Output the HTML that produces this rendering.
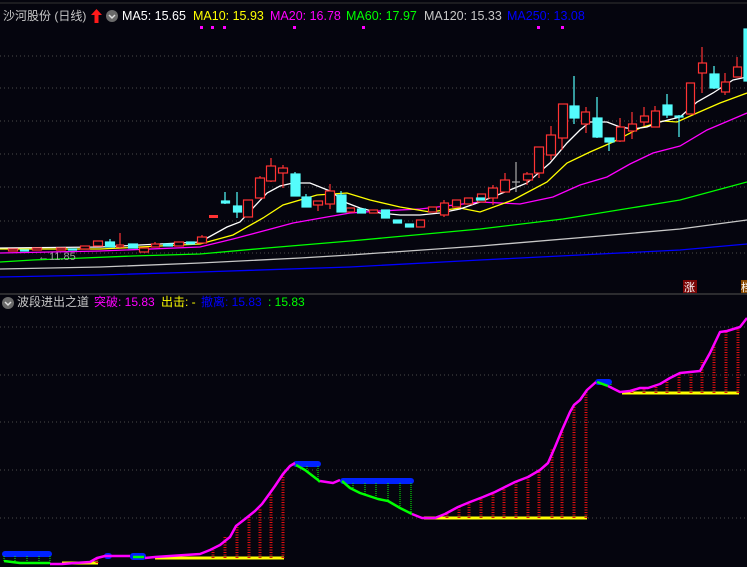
<!DOCTYPE html>
<html><head><meta charset="utf-8"><style>
html,body{margin:0;padding:0;background:#05050e;}
body{width:747px;height:567px;overflow:hidden;position:relative;font-family:"Liberation Sans","Noto Sans CJK SC",sans-serif;}
.t{position:absolute;font-size:12.5px;white-space:nowrap;line-height:16px;}
</style></head><body>
<svg width="747" height="567" style="position:absolute;left:0;top:0" xmlns="http://www.w3.org/2000/svg">
<rect width="747" height="567" fill="#05050e"/>
<line x1="0" y1="3" x2="747" y2="3" stroke="#333" />
<g stroke="#4a4a4a" stroke-dasharray="1 3">
<line x1="0" y1="56" x2="747" y2="56"/><line x1="0" y1="88" x2="747" y2="88"/><line x1="0" y1="121" x2="747" y2="121"/><line x1="0" y1="154" x2="747" y2="154"/><line x1="0" y1="187" x2="747" y2="187"/><line x1="0" y1="221" x2="747" y2="221"/><line x1="0" y1="253" x2="747" y2="253"/>
<line x1="0" y1="327" x2="747" y2="327"/><line x1="0" y1="375" x2="747" y2="375"/><line x1="0" y1="422" x2="747" y2="422"/><line x1="0" y1="470" x2="747" y2="470"/><line x1="0" y1="518" x2="747" y2="518"/>
</g>
<line x1="0" y1="294" x2="747" y2="294" stroke="#3a3a3a" stroke-width="1.5"/>
<g fill="#ff00ff"><rect x="200" y="26" width="3" height="3"/><rect x="211" y="26" width="3" height="3"/><rect x="223" y="26" width="3" height="3"/><rect x="293" y="26" width="3" height="3"/><rect x="362" y="26" width="3" height="3"/><rect x="537" y="26" width="3" height="3"/><rect x="561" y="26" width="3" height="3"/></g>
<g fill="none" stroke-width="1.3">
<polyline stroke="#0000ff" points="0,277 100,275 200,272 350,267 480,260 600,254 680,250 747,244"/>
<polyline stroke="#c8c8c8" points="0,269 100,267 200,263 300,258 350,255 480,246 600,236 680,229 747,220"/>
<polyline stroke="#00ff00" points="0,262 33,260 83,258 133,256 200,254 267,248 350,241 480,229 563,219 680,200 747,182"/>
<polyline stroke="#ff00ff" points="0,253 100,251 200,247 233,239 267,230 293,223 327,217 350,213 380,211 420,209 480,202 520,204 553,197 580,185 607,177 630,164 653,153 680,146 707,130 747,113"/>
<polyline stroke="#ffff00" points="0,249 100,249 200,244 233,235 263,218 283,205 317,195 347,193 370,200 400,207 430,212 460,208 480,212 513,200 547,182 567,163 590,152 613,142 640,128 663,121 677,122 697,113 720,103 747,93"/>
<polyline stroke="#ffffff" points="0,248 100,247 200,242 227,227 240,222 253,208 267,193 280,186 293,183 310,183 330,191 347,203 360,208 380,213 400,215 420,215 440,213 460,209 480,202 500,194 527,183 550,163 567,143 580,130 590,122 607,122 620,127 633,129 647,127 660,122 680,117 697,102 713,93 733,80 747,77"/>
</g>
<g stroke-width="1.2">
<g stroke="#ff3333" fill="#05050e">
<line x1="120" y1="233" x2="120" y2="248"/>
<line x1="155" y1="242" x2="155" y2="247"/>
<line x1="202" y1="235" x2="202" y2="243"/>
<line x1="248" y1="200" x2="248" y2="217"/>
<line x1="260" y1="176" x2="260" y2="198"/>
<line x1="271" y1="158" x2="271" y2="182"/>
<line x1="283" y1="165" x2="283" y2="188"/>
<line x1="318" y1="201" x2="318" y2="211"/>
<line x1="330" y1="184" x2="330" y2="209"/>
<line x1="444" y1="200" x2="444" y2="217"/>
<line x1="493" y1="185" x2="493" y2="205"/>
<line x1="505" y1="173" x2="505" y2="192"/>
<line x1="527" y1="172" x2="527" y2="185"/>
<line x1="539" y1="147" x2="539" y2="178"/>
<line x1="551" y1="126" x2="551" y2="160"/>
<line x1="562" y1="104" x2="562" y2="150"/>
<line x1="586" y1="107" x2="586" y2="133"/>
<line x1="620" y1="118" x2="620" y2="142"/>
<line x1="632" y1="112" x2="632" y2="139"/>
<line x1="644" y1="107" x2="644" y2="126"/>
<line x1="655" y1="106" x2="655" y2="127"/>
<line x1="702" y1="47" x2="702" y2="93"/>
<line x1="725" y1="73" x2="725" y2="95"/>
<line x1="737" y1="57" x2="737" y2="77"/>
<rect x="8.5" y="249" width="9" height="2"/><rect x="32.5" y="248" width="9" height="2"/><rect x="56.5" y="248" width="9" height="2"/><rect x="80.5" y="246" width="9" height="3"/>
<rect x="93.5" y="241" width="9" height="5"/><rect x="116.5" y="245" width="7" height="2"/><rect x="139.5" y="248" width="9" height="4"/><rect x="151.5" y="244" width="8" height="3"/><rect x="174.5" y="242" width="9" height="4"/><rect x="197.5" y="237" width="9" height="6"/>
<rect x="243.5" y="200" width="9" height="17"/><rect x="255.5" y="178" width="9" height="20"/><rect x="266.5" y="166" width="9" height="15"/><rect x="278.5" y="168" width="9" height="5"/>
<rect x="313.5" y="201" width="9" height="4"/><rect x="325.5" y="191" width="9" height="13"/><rect x="346.5" y="208" width="8" height="4"/><rect x="369.5" y="210" width="8" height="3"/>
<rect x="416.5" y="220" width="8" height="7"/><rect x="428.5" y="207" width="8" height="5"/><rect x="440.5" y="203" width="8" height="12"/><rect x="452.5" y="200" width="8" height="7"/><rect x="464.5" y="198" width="8" height="6"/>
<rect x="477.5" y="194" width="8" height="8"/><rect x="488.5" y="188" width="9" height="10"/><rect x="500.5" y="180" width="9" height="12"/><rect x="523.5" y="174" width="9" height="6"/><rect x="534.5" y="147" width="9" height="26"/><rect x="546.5" y="135" width="9" height="20"/><rect x="558.5" y="104" width="9" height="34"/>
<rect x="581.5" y="112" width="8" height="12"/><rect x="616.5" y="127" width="8" height="14"/><rect x="628.5" y="124" width="8" height="7"/><rect x="640.5" y="116" width="8" height="6"/><rect x="651.5" y="111" width="8" height="16"/><rect x="686.5" y="83" width="8" height="31"/><rect x="698.5" y="63" width="8" height="10"/><rect x="721.5" y="82" width="8" height="10"/><rect x="733.5" y="67" width="8" height="10"/>
</g>
<rect x="209" y="215" width="9" height="3" fill="#ff3333"/>
<g stroke="#aaaaaa"><line x1="516" y1="162" x2="516" y2="192"/><line x1="512" y1="182" x2="520" y2="182"/></g>
<g stroke="#54fcfc" fill="#54fcfc">
<line x1="110" y1="239" x2="110" y2="247"/><line x1="225" y1="192" x2="225" y2="204"/><line x1="237" y1="192" x2="237" y2="218"/><line x1="295" y1="172" x2="295" y2="196"/><line x1="306" y1="194" x2="306" y2="207"/><line x1="341" y1="191" x2="341" y2="212"/>
<line x1="574" y1="76" x2="574" y2="124"/><line x1="597" y1="97" x2="597" y2="138"/><line x1="609" y1="138" x2="609" y2="151"/><line x1="667" y1="94" x2="667" y2="118"/><line x1="679" y1="115" x2="679" y2="137"/><line x1="714" y1="66" x2="714" y2="89"/>
<rect x="20.5" y="250" width="8" height="1"/><rect x="68.5" y="249" width="8" height="1"/>
<rect x="105.5" y="242" width="9" height="5"/><rect x="128.5" y="244" width="9" height="4"/><rect x="163.5" y="244" width="9" height="2"/><rect x="186.5" y="242" width="8" height="2"/>
<rect x="221.5" y="201" width="8" height="2"/><rect x="233.5" y="206" width="8" height="6"/><rect x="291" y="174" width="9" height="22"/><rect x="302" y="197" width="9" height="10"/><rect x="337" y="195" width="9" height="17"/>
<rect x="357.5" y="209" width="8" height="4"/><rect x="381.5" y="210" width="8" height="8"/><rect x="393.5" y="220" width="8" height="3"/><rect x="405.5" y="224" width="8" height="3"/><rect x="476.5" y="198" width="8" height="2"/>
<rect x="570" y="106" width="9" height="12"/><rect x="593" y="118" width="9" height="19"/><rect x="605" y="138" width="9" height="4"/><rect x="663" y="105" width="9" height="10"/><rect x="675" y="116" width="8" height="1"/><rect x="710" y="74" width="9" height="14"/><rect x="744" y="29" width="3" height="52"/>
</g>
</g>
<text x="38" y="260" fill="#a0a0a0" font-size="11" font-family="Liberation Sans, sans-serif">←11.85</text>
<rect x="683" y="280" width="14" height="13" fill="#7a0505"/>
<text x="684" y="291" fill="#fff" font-size="11" font-family="Noto Sans CJK SC, sans-serif">涨</text>
<rect x="741" y="280" width="8" height="13" fill="#8a4a00"/>
<text x="741" y="291" fill="#fff" font-size="11" font-family="Noto Sans CJK SC, sans-serif">档</text>

<g fill="#0022ff" stroke="#0022ff" stroke-linejoin="round" stroke-width="2">
<rect x="3" y="552" width="48" height="4" rx="2"/>
<rect x="105" y="554" width="6" height="4" rx="2"/>
<rect x="131" y="554" width="14" height="5" rx="2"/>
<rect x="294" y="462" width="26" height="4" rx="2"/>
<rect x="341" y="479" width="72" height="4" rx="2"/>
<rect x="596" y="380" width="15" height="4" rx="2"/>
</g>
<g stroke="#ffff00" stroke-width="3">
<line x1="62" y1="563" x2="98" y2="563"/>
<line x1="155" y1="558" x2="284" y2="558"/>
<line x1="424" y1="518" x2="587" y2="518"/>
<line x1="622" y1="393" x2="739" y2="393"/>
</g>
<g stroke="#e01010" stroke-width="3" stroke-dasharray="1 1.5">
<line x1="74" y1="563" x2="74" y2="561"/><line x1="86" y1="563" x2="86" y2="561"/><line x1="97" y1="563" x2="97" y2="558"/>
<line x1="213" y1="558" x2="213" y2="550"/><line x1="225" y1="558" x2="225" y2="537"/><line x1="237" y1="558" x2="237" y2="524"/><line x1="249" y1="558" x2="249" y2="517"/><line x1="260" y1="558" x2="260" y2="508"/><line x1="271" y1="558" x2="271" y2="494"/><line x1="283" y1="558" x2="283" y2="474"/>
<line x1="447" y1="518" x2="447" y2="512"/><line x1="459" y1="518" x2="459" y2="506"/><line x1="469" y1="518" x2="469" y2="501"/><line x1="481" y1="518" x2="481" y2="497"/><line x1="493" y1="518" x2="493" y2="492"/><line x1="504" y1="518" x2="504" y2="487"/><line x1="516" y1="518" x2="516" y2="482"/><line x1="528" y1="518" x2="528" y2="477"/><line x1="539" y1="518" x2="539" y2="469"/><line x1="552" y1="518" x2="552" y2="448"/><line x1="562" y1="518" x2="562" y2="430"/><line x1="574" y1="518" x2="574" y2="405"/><line x1="586" y1="518" x2="586" y2="391"/>
<line x1="632" y1="393" x2="632" y2="390"/><line x1="644" y1="393" x2="644" y2="388"/><line x1="656" y1="393" x2="656" y2="384"/><line x1="667" y1="393" x2="667" y2="379"/><line x1="679" y1="393" x2="679" y2="373"/><line x1="691" y1="393" x2="691" y2="372"/><line x1="702" y1="393" x2="702" y2="360"/><line x1="714" y1="393" x2="714" y2="345"/><line x1="726" y1="393" x2="726" y2="330"/><line x1="738" y1="393" x2="738" y2="326"/>
</g>
<g stroke="#00ff00" stroke-width="1" stroke-dasharray="1 1">
<line x1="4" y1="556" x2="4" y2="561"/><line x1="15" y1="556" x2="15" y2="562"/><line x1="27" y1="556" x2="27" y2="562"/><line x1="39" y1="556" x2="39" y2="563"/><line x1="50" y1="556" x2="50" y2="563"/>
<line x1="307" y1="466" x2="307" y2="471"/><line x1="318" y1="466" x2="318" y2="480"/>
<line x1="353" y1="483" x2="353" y2="490"/><line x1="365" y1="483" x2="365" y2="494"/><line x1="376" y1="483" x2="376" y2="499"/><line x1="388" y1="483" x2="388" y2="501"/><line x1="400" y1="483" x2="400" y2="508"/><line x1="411" y1="483" x2="411" y2="513"/>
<line x1="611" y1="384" x2="611" y2="387"/>
</g>
<g fill="none" stroke-width="2.5" stroke-linejoin="round">
<polyline stroke="#00ff00" points="4,561 12,562 20,563 50,563"/>
<polyline stroke="#ff00ff" points="50,564 62,564 75,563 90,562 97,558 105,556 130,556"/>
<polyline stroke="#00ff00" points="133,557 144,557"/>
<polyline stroke="#ff00ff" points="145,558 155,557 170,556 185,555 200,554 210,550 220,545 230,537 236,526 245,519 255,511 262,504 270,493 275,486 283,474 290,466 295,463"/>
<polyline stroke="#00ff00" points="296,465 305,470 318,480 320,482"/>
<polyline stroke="#ff00ff" points="320,481 333,483 340,480"/>
<polyline stroke="#00ff00" points="342,481 350,488 360,493 378,499 388,501 400,508 412,514"/>
<polyline stroke="#ff00ff" points="412,514 422,518 435,518 445,514 458,507 470,502 483,497 495,492 505,487 515,482 528,477 540,470 548,463 555,447 562,430 570,412 574,405 580,400 587,390 596,382"/>
<polyline stroke="#00ff00" points="597,382 608,386"/>
<polyline stroke="#ff00ff" points="608,386 620,392 630,391 640,388 648,388 660,384 670,378 680,373 690,372 700,371 710,353 720,332 727,331 740,327 747,318"/>
</g>
</svg>

<div class="t" style="left:3px;top:8px;color:#c8c8c8;font-size:12px">沙河股份 (日线)</div>
<svg style="position:absolute;left:91px;top:9px" width="11" height="14"><polygon points="5.5,0 11,6 7.5,6 7.5,14 3.5,14 3.5,6 0,6" fill="#ff1a1a"/></svg>
<svg style="position:absolute;left:106px;top:10px" width="12" height="12"><circle cx="6" cy="6" r="6" fill="#6a6a6a"/><polyline points="3,5 6,8 9,5" fill="none" stroke="#ddd" stroke-width="1.5"/></svg>
<div class="t" style="left:122px;top:8px;color:#ffffff">MA5: 15.65</div>
<div class="t" style="left:193px;top:8px;color:#ffff00">MA10: 15.93</div>
<div class="t" style="left:270px;top:8px;color:#ff00ff">MA20: 16.78</div>
<div class="t" style="left:346px;top:8px;color:#00ff00">MA60: 17.97</div>
<div class="t" style="left:424px;top:8px;color:#c8c8c8">MA120: 15.33</div>
<div class="t" style="left:507px;top:8px;color:#0000ff">MA250: 13.08</div>

<svg style="position:absolute;left:2px;top:297px" width="12" height="12"><circle cx="6" cy="6" r="6" fill="#6a6a6a"/><polyline points="3,5 6,8 9,5" fill="none" stroke="#ddd" stroke-width="1.5"/></svg>
<div class="t" style="left:17px;top:294px;color:#c8c8c8;font-size:12px">波段进出之道</div>
<div class="t" style="left:94px;top:294px;color:#ff00ff;font-size:12px">突破: 15.83</div>
<div class="t" style="left:161px;top:294px;color:#ffff00;font-size:12px">出击: -</div>
<div class="t" style="left:201px;top:294px;color:#0000ff;font-size:12px">撤离: 15.83</div>
<div class="t" style="left:268px;top:294px;color:#00ff00;font-size:12px">: 15.83</div>
</body></html>
